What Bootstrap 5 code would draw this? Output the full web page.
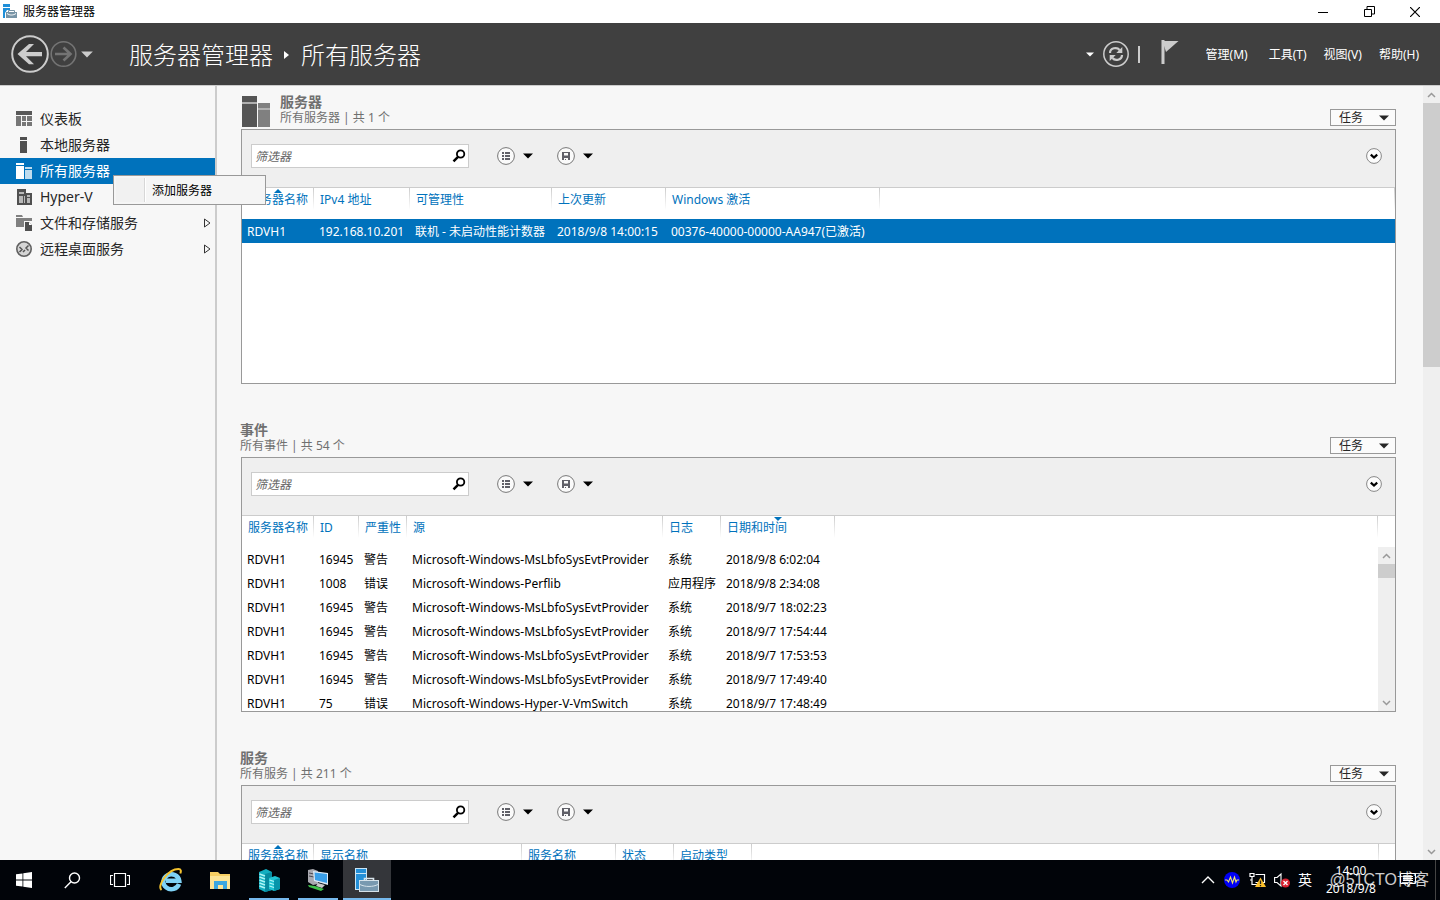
<!DOCTYPE html>
<html lang="zh-CN">
<head>
<meta charset="utf-8">
<meta name="viewport" content="width=device-width, initial-scale=1">
<title>服务器管理器</title>
<link href="https://cdn.jsdelivr.net/npm/bootstrap@5.3.0/dist/css/bootstrap.min.css" rel="stylesheet">
<style>
  :root { --accent: #0072bc; --line: #999; --soft: #ccc; --pane: #f7f7f7; }
  body { font-family: "Noto Sans", "Noto Sans CJK SC", sans-serif; font-size: 12px; line-height: 16px; color: #000; background: var(--pane); }
  svg { display: block; flex: none; }
  button, a { color: inherit; text-decoration: none; }
  .plain { border: 0; background: none; padding: 0; color: inherit; }

  .titlebar { height: 23px; background: #fff; padding: 0 2px 0 3px; gap: 6px; }
  .win-btn { width: 46px; height: 21px; display: grid; place-items: center; }

  .topbar { height: 62px; background: #404040; color: #fff; padding: 0 21px 0 11px; }
  .crumbs { font-size: 24px; line-height: 32px; font-weight: 300; gap: 11px; margin-left: 36px; padding-top: 2px; }
  .tick { width: 2px; height: 17px; margin: 0 18px 0 8px; background: #ccc; }
  .menus { gap: 17px; margin-left: 24px; padding-top: 2px; }

  .workspace { border-top: 1px solid var(--soft); min-height: 0; }
  .sidebar { width: 217px; flex: none; border-right: 2px solid var(--soft); padding-top: 20px; font-size: 14px; color: #262626; }
  .sidebar .nav-link { display: flex; align-items: center; gap: 8px; height: 26px; padding: 0 4px 0 16px; border-radius: 0; color: #262626; }
  .sidebar .nav-link.active { background: var(--accent); color: #fff; }
  .ctx { position: absolute; left: 113px; top: 17px; z-index: 20; min-width: 153px; padding: 2px; border: 1px solid var(--line); border-radius: 0; background: #f5f5f5; font-size: 12px; }
  .ctx .dropdown-item { padding: 1px 0 0 36px; line-height: 23px; color: #000; background: linear-gradient(90deg, #f1f1f1 28px, #d7d7d7 28px, #d7d7d7 29px, #fff 29px, #fff 30px, #f5f5f5 30px); }

  .content { min-width: 0; overflow: hidden; padding: 7px 27px 0 24px; gap: 37px; }
  .content > section { flex: none; }
  .tile-head { height: 36px; color: #707070; }
  .tile-head h2 { font-size: 14px; line-height: 18px; font-weight: 700; margin: 0; }
  .tile-head p { margin: 0; line-height: 14px; }
  .tile-icon { margin: 0 8px 2px 0; }
  .flush { margin-left: -1px; }
  .tasks { width: 66px; height: 17px; border: 1px solid var(--line); border-radius: 0; background: #fbfbfb; padding: 0 6px 0 8px; margin-bottom: 3px; font-size: 12px; line-height: 15px; color: #262626; }
  .tile-box { border: 1px solid var(--line); background: #fff; }
  .tools { height: 58px; background: #efefef; border-bottom: 1px solid var(--soft); padding: 14px 13px 0 9px; }
  .filter { width: 218px; height: 24px; border: 1px solid var(--soft); background: #fff; padding-right: 2px; }
  .filter input { min-width: 0; border: 0; border-radius: 0; padding: 1px 0 0 3px; font-size: 12px; line-height: 21px; font-style: italic; background: none; }
  .filter input::placeholder { color: #666; }
  .queries { height: 24px; margin-left: 28px; gap: 24px; }
  .grid-pane { height: 195px; overflow: hidden; }
  .grid-table { width: 100%; table-layout: fixed; margin: 0; }
  .grid-table th { position: relative; height: 31px; padding: 0 0 0 6px; vertical-align: top; font-weight: 400; line-height: 23px; color: var(--accent); white-space: nowrap; }
  .grid-table th::after { content: ""; position: absolute; right: 0; top: 0; width: 1px; height: 22px; background: linear-gradient(#ccc, #fff); }
  .grid-table td { height: 24px; padding: 2px 0 0 5px; line-height: 22px; white-space: nowrap; }
  .grid-table tr.chosen td { background: var(--accent); color: #fff; }
  .sort { position: absolute; left: 50%; top: 1px; margin-left: -4px; }

  .vbar { width: 17px; flex: none; background: #efefef; }
  .vbar > svg { margin: 0 4px; height: 17px; }
  .thumb { background: #cdcdcd; }
  .under-head { margin-top: 31px; }

  .taskbar { height: 40px; background: #010409; color: #fff; position: relative; }
  .task { width: 48px; height: 40px; display: grid; place-items: center; position: relative; }
  .pinned { margin-left: 3px; gap: 1px; }
  .task.running::after { content: ""; position: absolute; left: 4px; right: 4px; bottom: 0; height: 2px; background: #76b9ed; }
  .task.focused { background: #34363a; }
  .task.focused::after { left: 0; right: 0; }
  .tray { gap: 8px; height: 40px; margin-right: 4px; padding-right: 19px; border-right: 1px solid #444; }
  .lang { font-size: 14px; }
  .clock { line-height: 18px; margin-left: 6px; }
  .stamp { position: absolute; right: 11px; top: 8px; font-family: "Liberation Sans", "Noto Sans CJK SC", sans-serif; font-size: 16px; line-height: 24px; color: #fff; opacity: .8; }
</style>
</head>
<body class="vh-100 d-flex flex-column overflow-hidden">

<svg width="0" height="0" class="position-absolute" aria-hidden="true">
  <symbol id="caret" viewBox="0 0 10 6"><path d="M0 .5h10L5 5.5z" fill="currentColor"/></symbol>
  <symbol id="lens" viewBox="0 0 14 14"><circle cx="8.600" cy="5" r="3.700" fill="none" stroke="#000" stroke-width="1.800"/><path d="M6 7.800 1.500 12.300" stroke="#000" stroke-width="2.400"/></symbol>
  <symbol id="listc" viewBox="0 0 18 18"><circle cx="9" cy="9" r="8.400" fill="#fafafa" stroke="#777"/><path d="M5 6h2M8 6h5M5 9h2M8 9h5M5 12h2M8 12h5" stroke="#606068" stroke-width="1.800"/></symbol>
  <symbol id="savec" viewBox="0 0 18 18"><circle cx="9" cy="9" r="8.400" fill="#fafafa" stroke="#777"/><path fill-rule="evenodd" d="M5 5h8v8H5zM7 6v2.500h4V6zM7 11v2h1v-1h1v1h2v-2z" fill="#606068"/></symbol>
  <symbol id="openc" viewBox="0 0 16 16"><circle cx="8" cy="8" r="7.400" fill="#fcfcfc" stroke="#888"/><path d="M4.800 6.600 8 9.600l3.200-3" fill="none" stroke="#000" stroke-width="2.200"/></symbol>
  <symbol id="up" viewBox="0 0 9 17"><path d="M1 11 4.500 7.500 8 11" fill="none" stroke="#999" stroke-width="1.500"/></symbol>
  <symbol id="down" viewBox="0 0 9 17"><path d="M1 7l3.500 3.500L8 7" fill="none" stroke="#999" stroke-width="1.500"/></symbol>
  <symbol id="sortup" viewBox="0 0 8 4"><path d="M0 4 4 0l4 4z" fill="#0072bc"/></symbol>
  <symbol id="sortdown" viewBox="0 0 8 4"><path d="M0 0h8L4 4z" fill="#0072bc"/></symbol>
  <symbol id="expand" viewBox="0 0 8 10"><path d="M1.500 1v8L7 5z" fill="none" stroke="#333"/></symbol>
  <symbol id="manager" viewBox="0 0 24 24"><path d="M0 0h12v22H0z" fill="#c9e6f7"/><path d="M1 1h10v4H1zM1 6h10v15H1z" fill="#2490d8"/><path d="M4 12h20v12H4z" fill="#d5e2ea"/><path d="M9.500 13.500v-3h9v3" fill="none" stroke="#d9e5ec" stroke-width="1.600"/><path d="M5 13h18v10H5z" fill="#7899b0"/><path d="M5 16.500c5 2.600 13 2.600 18 0" fill="none" stroke="#d5e2ea"/></symbol>
</svg>

<header class="titlebar d-flex align-items-center flex-shrink-0">
  <svg width="14" height="15" viewBox="0 0 14 15"><path d="M0 0h7v3H0zM0 4h7v2H4L2 9v5H0z" fill="#1f8fd8"/><path d="M3 8h11v6H3z" fill="#7894a6"/><path d="M5.500 8V6.500h6V8" fill="none" stroke="#7894a6"/><path d="M4 9.500c3 2 6 2 9 0" fill="none" stroke="#fff"/></svg>
  <span>服务器管理器</span>
  <div class="ms-auto d-flex">
    <button class="plain win-btn" aria-label="最小化"><svg width="10" height="10"><path d="M0 5.500h10" stroke="#000"/></svg></button>
    <button class="plain win-btn" aria-label="还原"><svg width="11" height="11"><path d="M.5 3.500h7v7h-7zM3 3V.5h7.500V8H8" fill="none" stroke="#000"/></svg></button>
    <button class="plain win-btn" aria-label="关闭"><svg width="10" height="10"><path d="M0 0l10 10M10 0 0 10" stroke="#000" stroke-width="1.200"/></svg></button>
  </div>
</header>

<nav class="topbar d-flex align-items-center flex-shrink-0" aria-label="导航">
  <button class="plain" aria-label="后退"><svg width="38" height="38" viewBox="0 0 38 38"><circle cx="19" cy="19" r="17.800" fill="#383838" stroke="#ccc" stroke-width="2"/><path d="M6.500 19 18 9h5l-8 8h16v4.200H15l8 8h-5z" fill="#ccc"/></svg></button>
  <button class="plain" aria-label="前进"><svg width="28" height="28" viewBox="0 0 28 28"><circle cx="14.500" cy="14" r="12.300" fill="none" stroke="#747474" stroke-width="1.600"/><path d="M6 14h15.500M14.500 7.500l7 6.500-7 6.500" fill="none" stroke="#747474" stroke-width="2.600"/></svg></button>
  <button class="plain ms-1" aria-label="历史"><svg width="12" height="7" color="#ccc"><use href="#caret"/></svg></button>
  <div class="crumbs d-flex align-items-center">
    <span>服务器管理器</span>
    <svg width="6" height="8"><path d="M0 0v8l5-4z" fill="#fff"/></svg>
    <span>所有服务器</span>
  </div>
  <div class="ms-auto d-flex align-items-center">
    <button class="plain" aria-label="更多"><svg width="8" height="5"><use href="#caret"/></svg></button>
    <button class="plain ms-2" aria-label="刷新"><svg width="28" height="28" viewBox="0 0 28 28"><circle cx="14" cy="14" r="12.200" fill="none" stroke="#ccc" stroke-width="1.500"/><path d="M8 13c0-5 7-6.500 9.500-3M20 15c0 5-7 6.500-9.500 3" fill="none" stroke="#ccc" stroke-width="2.200"/><path d="M20.300 7v6h-6zM7.700 21v-6h6z" fill="#ccc"/></svg></button>
    <span class="tick"></span>
    <button class="plain" aria-label="通知"><svg width="24" height="28" viewBox="0 0 24 28"><path d="M4.500 1h16L8 12z" fill="#ccc"/><path d="M5 0v24" stroke="#ccc" stroke-width="3"/><path d="M3.500 0v24" stroke="#8a8a8a"/></svg></button>
    <div class="menus d-flex">
      <button class="plain me-1">管理(M)</button><button class="plain">工具(T)</button><button class="plain">视图(V)</button><button class="plain">帮助(H)</button>
    </div>
  </div>
</nav>

<div class="workspace d-flex flex-grow-1">
  <aside class="sidebar">
    <ul class="nav flex-column">
      <li><a class="nav-link" href="#"><svg width="16" height="16" fill="#595959"><path d="M0 0h16v4H0z"/><path d="M0 5h5v10H0zM6 5h4v5H6zM11 5h5v5h-5zM6 11h4v4H6zM11 11h5v4h-5z" fill="#777"/></svg>仪表板</a></li>
      <li><a class="nav-link" href="#"><svg width="16" height="16" fill="#505050"><path d="M4 0h7v3H4zM4 4h7v12H4z"/></svg>本地服务器</a></li>
      <li class="position-relative"><a class="nav-link active" href="#"><svg width="16" height="16" fill="#fff"><path d="M0 0h8v2H0zM0 3h8v13H0z"/><path d="M9 4h7v2H9zM9 7h7v9H9z" fill="#bfdcee"/></svg>所有服务器</a>
        <div class="dropdown-menu show ctx"><button class="dropdown-item">添加服务器</button></div>
      </li>
      <li><a class="nav-link" href="#"><svg width="16" height="16"><path d="M1 0h9v16H1zM9 4h7v12H9z" fill="#505050"/><path d="M3 3h5v2H3zM3 7h4v7H3zM8 7h1v7H8zM11 6h3v2h-3zM11 9h3v5h-3z" fill="#b8b8b8"/></svg>Hyper-V</a></li>
      <li><a class="nav-link" href="#"><svg width="16" height="16"><path d="M0 0h6l1 2H0zM0 3h16v3H8v6H0z" fill="#808080"/><path d="M9 7h4l3 3v6H9z" fill="#505050"/><path d="M13 7v3h3z" fill="#fff"/></svg>文件和存储服务<svg class="ms-auto" width="8" height="10"><use href="#expand"/></svg></a></li>
      <li><a class="nav-link" href="#"><svg width="16" height="16"><circle cx="8" cy="8" r="7.200" fill="#d5d5d5" stroke="#606060" stroke-width="1.600"/><path d="M3.500 6 6 8.500 3.500 11M12.500 4.500 10 7l2.500 2.500M7 11l2-2" fill="none" stroke="#555" stroke-width="1.500"/></svg>远程桌面服务<svg class="ms-auto" width="8" height="10"><use href="#expand"/></svg></a></li>
    </ul>
  </aside>

  <main class="content d-flex flex-column flex-grow-1">
    <section>
      <div class="tile-head d-flex align-items-end">
        <svg class="tile-icon" width="31" height="31"><path d="M1 0h15v31H1z" fill="#555"/><path d="M17 7h12v24H17z" fill="#808080"/><path d="M1 6h15v2H1zM17 12h12v2H17z" fill="#b0b0b0"/></svg>
        <div class="align-self-start"><h2>服务器</h2><p>所有服务器 | 共 1 个</p></div>
        <button class="tasks d-flex align-items-center justify-content-between ms-auto">任务<svg width="10" height="6"><use href="#caret"/></svg></button>
      </div>
      <div class="tile-box">
        <div class="tools d-flex align-items-start">
          <div class="filter d-flex align-items-center"><input class="form-control shadow-none" type="text" placeholder="筛选器" aria-label="筛选服务器"><button class="plain" aria-label="搜索"><svg width="14" height="14"><use href="#lens"/></svg></button></div>
          <div class="queries d-flex align-items-center">
            <button class="plain d-flex align-items-center gap-2" aria-label="保存的条件"><svg width="18" height="18"><use href="#listc"/></svg><svg width="10" height="6"><use href="#caret"/></svg></button>
            <button class="plain d-flex align-items-center gap-2" aria-label="保存查询"><svg width="18" height="18"><use href="#savec"/></svg><svg width="10" height="6"><use href="#caret"/></svg></button>
          </div>
          <button class="plain ms-auto mt-1" aria-label="展开"><svg width="16" height="16"><use href="#openc"/></svg></button>
        </div>
        <div class="grid-pane">
          <table class="grid-table">
            <colgroup><col style="width:72px"><col style="width:96px"><col style="width:142px"><col style="width:114px"><col style="width:214px"><col></colgroup>
            <thead><tr><th>服务器名称<svg class="sort" width="8" height="4"><use href="#sortup"/></svg></th><th>IPv4 地址</th><th>可管理性</th><th>上次更新</th><th>Windows 激活</th><th></th></tr></thead>
            <tbody><tr class="chosen"><td>RDVH1</td><td>192.168.10.201</td><td>联机 - 未启动性能计数器</td><td>2018/9/8 14:00:15</td><td>00376-40000-00000-AA947(已激活)</td><td></td></tr></tbody>
          </table>
        </div>
      </div>
    </section>

    <section>
      <div class="tile-head d-flex align-items-end">
        <div class="align-self-start flush"><h2>事件</h2><p>所有事件 | 共 54 个</p></div>
        <button class="tasks d-flex align-items-center justify-content-between ms-auto">任务<svg width="10" height="6"><use href="#caret"/></svg></button>
      </div>
      <div class="tile-box">
        <div class="tools d-flex align-items-start">
          <div class="filter d-flex align-items-center"><input class="form-control shadow-none" type="text" placeholder="筛选器" aria-label="筛选事件"><button class="plain" aria-label="搜索"><svg width="14" height="14"><use href="#lens"/></svg></button></div>
          <div class="queries d-flex align-items-center">
            <button class="plain d-flex align-items-center gap-2" aria-label="保存的条件"><svg width="18" height="18"><use href="#listc"/></svg><svg width="10" height="6"><use href="#caret"/></svg></button>
            <button class="plain d-flex align-items-center gap-2" aria-label="保存查询"><svg width="18" height="18"><use href="#savec"/></svg><svg width="10" height="6"><use href="#caret"/></svg></button>
          </div>
          <button class="plain ms-auto mt-1" aria-label="展开"><svg width="16" height="16"><use href="#openc"/></svg></button>
        </div>
        <div class="grid-pane d-flex">
          <div class="flex-grow-1">
          <table class="grid-table">
            <colgroup><col style="width:72px"><col style="width:45px"><col style="width:48px"><col style="width:256px"><col style="width:58px"><col style="width:114px"><col></colgroup>
            <thead><tr><th>服务器名称</th><th>ID</th><th>严重性</th><th>源</th><th>日志</th><th>日期和时间<svg class="sort" width="8" height="4"><use href="#sortdown"/></svg></th><th></th></tr></thead>
            <tbody>
              <tr><td>RDVH1</td><td>16945</td><td>警告</td><td>Microsoft-Windows-MsLbfoSysEvtProvider</td><td>系统</td><td>2018/9/8 6:02:04</td><td></td></tr>
              <tr><td>RDVH1</td><td>1008</td><td>错误</td><td>Microsoft-Windows-Perflib</td><td>应用程序</td><td>2018/9/8 2:34:08</td><td></td></tr>
              <tr><td>RDVH1</td><td>16945</td><td>警告</td><td>Microsoft-Windows-MsLbfoSysEvtProvider</td><td>系统</td><td>2018/9/7 18:02:23</td><td></td></tr>
              <tr><td>RDVH1</td><td>16945</td><td>警告</td><td>Microsoft-Windows-MsLbfoSysEvtProvider</td><td>系统</td><td>2018/9/7 17:54:44</td><td></td></tr>
              <tr><td>RDVH1</td><td>16945</td><td>警告</td><td>Microsoft-Windows-MsLbfoSysEvtProvider</td><td>系统</td><td>2018/9/7 17:53:53</td><td></td></tr>
              <tr><td>RDVH1</td><td>16945</td><td>警告</td><td>Microsoft-Windows-MsLbfoSysEvtProvider</td><td>系统</td><td>2018/9/7 17:49:40</td><td></td></tr>
              <tr><td>RDVH1</td><td>75</td><td>错误</td><td>Microsoft-Windows-Hyper-V-VmSwitch</td><td>系统</td><td>2018/9/7 17:48:49</td><td></td></tr>
            </tbody>
          </table>
          </div>
          <div class="vbar under-head d-flex flex-column"><svg width="9"><use href="#up"/></svg><div class="thumb" style="height:14px"></div><svg class="mt-auto" width="9"><use href="#down"/></svg></div>
        </div>
      </div>
    </section>

    <section>
      <div class="tile-head d-flex align-items-end">
        <div class="align-self-start flush"><h2>服务</h2><p>所有服务 | 共 211 个</p></div>
        <button class="tasks d-flex align-items-center justify-content-between ms-auto">任务<svg width="10" height="6"><use href="#caret"/></svg></button>
      </div>
      <div class="tile-box">
        <div class="tools d-flex align-items-start">
          <div class="filter d-flex align-items-center"><input class="form-control shadow-none" type="text" placeholder="筛选器" aria-label="筛选服务"><button class="plain" aria-label="搜索"><svg width="14" height="14"><use href="#lens"/></svg></button></div>
          <div class="queries d-flex align-items-center">
            <button class="plain d-flex align-items-center gap-2" aria-label="保存的条件"><svg width="18" height="18"><use href="#listc"/></svg><svg width="10" height="6"><use href="#caret"/></svg></button>
            <button class="plain d-flex align-items-center gap-2" aria-label="保存查询"><svg width="18" height="18"><use href="#savec"/></svg><svg width="10" height="6"><use href="#caret"/></svg></button>
          </div>
          <button class="plain ms-auto mt-1" aria-label="展开"><svg width="16" height="16"><use href="#openc"/></svg></button>
        </div>
        <div class="grid-pane pe-3">
          <table class="grid-table">
            <colgroup><col style="width:72px"><col style="width:208px"><col style="width:94px"><col style="width:58px"><col style="width:78px"><col></colgroup>
            <thead><tr><th>服务器名称<svg class="sort" width="8" height="4"><use href="#sortup"/></svg></th><th>显示名称</th><th>服务名称</th><th>状态</th><th>启动类型</th><th></th></tr></thead>
          </table>
        </div>
      </div>
    </section>
  </main>

  <div class="vbar d-flex flex-column"><svg width="9"><use href="#up"/></svg><div class="thumb" style="height:264px"></div><svg class="mt-auto" width="9"><use href="#down"/></svg></div>
</div>

<footer class="taskbar d-flex flex-shrink-0 align-items-center">
  <button class="plain task" aria-label="开始"><svg width="16" height="16" fill="#fff"><path d="M0 2.300 6.500 1.400v6.200H0zM7.300 1.300 16 0v7.600H7.300zM0 8.400h6.500v6.200L0 13.700zM7.300 8.400H16V16l-8.700-1.300z"/></svg></button>
  <button class="plain task" aria-label="搜索"><svg width="17" height="17"><circle cx="10.500" cy="6" r="5" fill="none" stroke="#fff" stroke-width="1.400"/><path d="M7 9.800.8 16" stroke="#fff" stroke-width="1.400"/></svg></button>
  <button class="plain task" aria-label="任务视图"><svg width="20" height="14"><path d="M4.500.5h11v13h-11zM3 2.500H.5v9H3M17 2.500h2.500v9H17" fill="none" stroke="#fff" stroke-width="1.200"/></svg></button>
  <div class="pinned d-flex">
  <button class="plain task" aria-label="Internet Explorer"><svg width="24" height="24" viewBox="0 0 24 24"><path d="M20 16A8 7.500 0 1 1 20.300 12.800H7" fill="none" stroke="#7fd3f7" stroke-width="4.400"/><path d="M2.500 22C-2.500 18 9 1 19.500 1c2.500 0 2.800 2 1.800 4.500" fill="none" stroke="#f4c32f" stroke-width="2"/></svg></button>
  <button class="plain task" aria-label="文件资源管理器"><svg width="22" height="19"><path d="M1 1h8l2 2h10v15H1z" fill="#f7cf62"/><path d="M1 5h20v13H1z" fill="#fde596"/><path d="M5 18v-8h13v8h-4v-4H9v4z" fill="#3ba7e0"/></svg></button>
  <button class="plain task running" aria-label="服务器"><svg width="24" height="24"><path d="M2 4 9 1l6 3v18l-7 2-6-3z" fill="#13aec0"/><path d="M8 6l7-2v18l-7 2z" fill="#078a9f"/><path d="M2.500 6 8 8M2.500 9l5.500 2M2.500 12 8 14M2.500 15 8 17M2.500 18 8 20" stroke="#adf4f4" stroke-width="1.500"/><path d="M12 10l6-2 5 2v11l-6 2-5-2z" fill="#20c4d3"/><path d="M17 12l6-2v11l-6 2z" fill="#0795aa"/><path d="M12.500 12l4.500 1.500M12.500 15l4.500 1.500M12.500 18l4.500 1.500" stroke="#b5f6f6" stroke-width="1.300"/></svg></button>
  <button class="plain task running" aria-label="远程桌面"><svg width="24" height="24"><path d="M2 2l5-1 5 2v13l-5 1-5-3z" fill="#a9a9b0"/><path d="M3 5l5 1M3 8l5 1" stroke="#4c4c54"/><path d="M7 3l15 2v12L8 13z" fill="#ddeaf5"/><path d="M8.500 4.500 21 6v9L9 12z" fill="#3a9fe8"/><path d="M12 15l7 2-3 3-6-2z" fill="#c9c9c9"/><path d="M2 17l7 1 9 3-3 2L3 19z" fill="#3fc34b"/></svg></button>
  <button class="plain task running focused" aria-label="服务器管理器"><svg width="24" height="24"><use href="#manager"/></svg></button>
  </div>

  <div class="tray ms-auto d-flex align-items-center">
    <svg width="14" height="16"><path d="M1 11l6-6 6 6" fill="none" stroke="#fff" stroke-width="1.400"/></svg>
    <svg width="18" height="16" viewBox="-1 0 18 16"><circle cx="8" cy="8" r="8" fill="#0000f4"/><path d="M1 8h2l1.500 2L6.500 5l2 6 2-6 1.500 5 1-2h2" fill="none" stroke="#f1e66a" stroke-width="1.100"/></svg>
    <svg width="17" height="16"><path d="M1 1.500h4v3H1zM3 5v7.500h5M6.500 2.500h9v8h-9M3 8H1" fill="none" stroke="#fff" stroke-width="1.200"/><path d="M11.500 5.500 17 15H6z" fill="#fcc02a"/><path d="M11.500 8.500v3.500M11.500 13v1.200" stroke="#222" stroke-width="1.300"/></svg>
    <svg width="16" height="16"><path d="M.6 5.500h2.500L7 2v12L3 10.500H.6z" fill="none" stroke="#fff" stroke-width="1.100"/><circle cx="11.500" cy="11" r="4.500" fill="#d92130"/><path d="M9.500 9l4 4M13.500 9l-4 4" stroke="#fff" stroke-width="1.300"/></svg>
    <span class="lang">英</span>
    <div class="clock text-center">14:00<br>2018/9/8</div>
    <svg class="ms-3" width="16" height="14"><path d="M.5.500h15v10H10l-2 2.500V10.500H.5zM3 3.500h10M3 5.500h10M3 7.500h10" fill="none" stroke="#fff"/></svg>
  </div>
  <div class="stamp">@51CTO博客</div>
</footer>

<script src="https://cdn.jsdelivr.net/npm/bootstrap@5.3.0/dist/js/bootstrap.bundle.min.js"></script>
</body>
</html>
